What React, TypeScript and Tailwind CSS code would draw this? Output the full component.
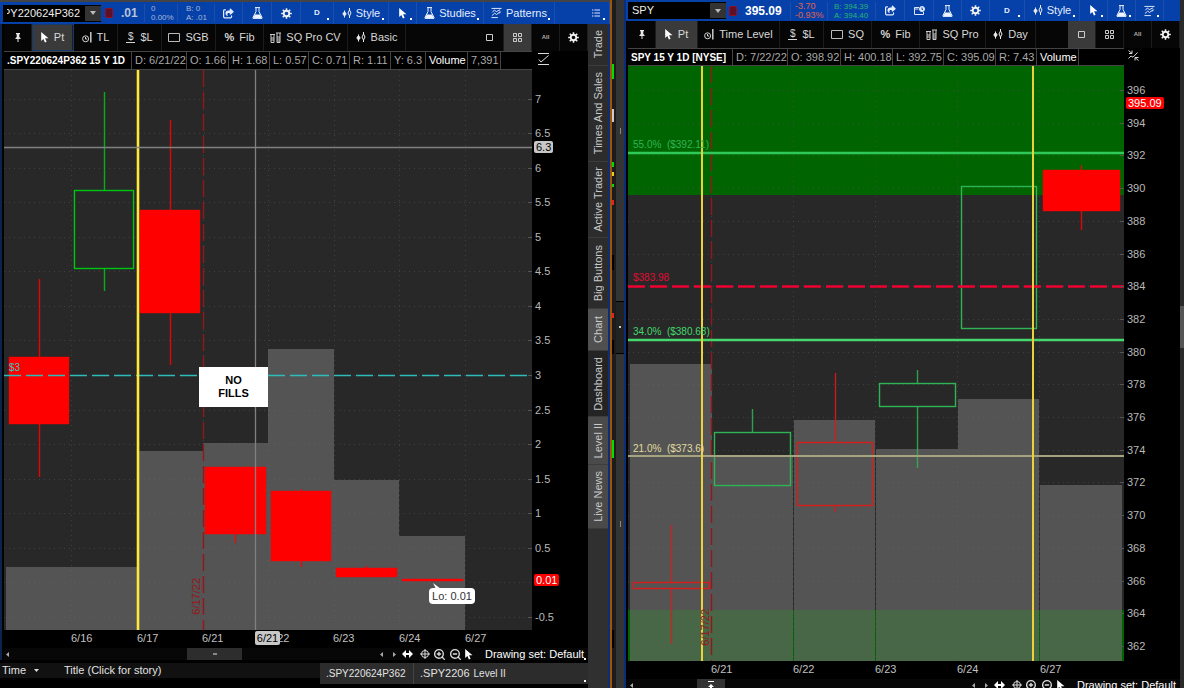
import React from "react";
import clsx from "clsx";
import { FaShareFromSquare } from "react-icons/fa6";
import { ZoomIn, ZoomOut } from "lucide-react";

type Candle = {
  x: number;
  w: number;
  top: number;
  bottom: number;
  high: number;
  low: number;
  color: string;
  hollow?: boolean;
};

type Volume = { x: number; w: number; top: number };
type Box = { x: number; y: number; w: number; h: number };
type Tick = { at: number; text: string };

/* ---------- icons ---------- */

const Pin = () => (
  <svg width="8" height="10" viewBox="0 0 8 10" fill="#e6e6e6">
    <path d="M2 0h4v1L5.3 1.5v2.4L6.6 5.2v.8H4.5V9h-1V6H1.4v-.8l1.3-1.3V1.5L2 1z" />
  </svg>
);

const Cursor = () => (
  <svg width="8" height="11" viewBox="0 0 9 13" fill="#fff">
    <path d="M0 0v10.5l2.6-2.3 1.8 4.2 2-.9-1.8-4.1H8.6z" />
  </svg>
);

const Gear = () => (
  <svg width="11" height="11" viewBox="0 0 12 12" fill="none" stroke="#f0f0f0">
    <circle cx="6" cy="6" r="3" strokeWidth="2" />
    <path d="M6 .2v2M6 9.8v2M.2 6h2M9.8 6h2M1.9 1.9l1.4 1.4M8.7 8.7l1.4 1.4M1.9 10.1l1.4-1.4M8.7 3.3l1.4-1.4" strokeWidth="1.7" />
  </svg>
);

const Flask = () => (
  <svg width="11" height="12" viewBox="0 0 11 12" fill="none" stroke="#eef3ff" strokeWidth="1">
    <path d="M3 .6h5M4 .6v4L1 10.4v1h9v-1L7 4.6v-4" />
    <path d="M3 7.6h5l1.8 3.4H1.2z" fill="#eef3ff" stroke="none" />
  </svg>
);

const Candles = () => (
  <svg width="10" height="11" viewBox="0 0 10 11" fill="none" stroke="#eee">
    <path d="M2.5 2.5v7M7.5 0v2M7.5 8v2" />
    <path d="M.8 6l1.7-2.5L4.2 6 2.5 8z" fill="#eee" />
    <path d="M6 5l1.5-3L9 5 7.5 8z" />
  </svg>
);

const Pattern = () => (
  <svg width="11" height="12" viewBox="0 0 12 12" fill="none" stroke="#eef3ff">
    <path d="M.5 1h11M1.5 5.2l2.2-2.5 2 1.8L10 2.5M.5 11h7M1 8.8l3-2.6 2 1.4 4-3M9 6.5l1.5-2" />
  </svg>
);

const ClockBar = () => (
  <svg width="10" height="11" viewBox="0 0 10 11" fill="none" stroke="#d5d5d5">
    <circle cx="3.6" cy="6.8" r="3" />
    <path d="M3.5 5v2h1.6" />
    <path d="M8.8 0v10.5" strokeWidth="1.4" />
  </svg>
);

const DollarLine = () => (
  <span className="flex w-[9px] flex-col items-center border-b border-[#d5d5d5] text-[10px] leading-[10px] text-[#d5d5d5]">$</span>
);

const Rect = () => (
  <svg width="12" height="9" viewBox="0 0 12 9" fill="none" stroke="#bbb">
    <path d="M.5.5h11v8H.5z" />
  </svg>
);

const Tubes = () => (
  <svg width="11" height="12" viewBox="0 0 11 12" fill="none" stroke="#ccc">
    <path d="M0 2.5h5M1 3v7.5h3V3M1 6h3M1 8h3M6 1h5M7 1v9.5h3V1M7 5h3M7 7h3M7 9h3" />
  </svg>
);

const Square = () => (
  <svg width="7" height="7" viewBox="0 0 7 7" fill="none" stroke="#ccc">
    <path d="M.5.5h6v6h-6z" />
  </svg>
);

const Grid = () => (
  <svg width="9" height="9" viewBox="0 0 9 9" fill="none" stroke="#ccc">
    <path d="M.5.5h3v3h-3zM5.5.5h3v3h-3zM.5 5.5h3v3h-3zM5.5 5.5h3v3h-3z" />
  </svg>
);

const ListIcon = () => (
  <svg width="8" height="8" viewBox="0 0 8 8" stroke="#dde8ff">
    <path d="M0 1h1.4M2.4 1H8M0 4h1.4M2.4 4H8M0 7h1.4M2.4 7H8" />
  </svg>
);

const DetachIcon = () => (
  <svg width="11" height="9" viewBox="0 0 11 9" fill="none" stroke="#dde8ff">
    <path d="M5 1.5H.5v7h9V6M.5 3h4" />
    <circle cx="8" cy="3" r="2.5" fill="#dde8ff" />
    <path d="M8 1.5v2h1" stroke="#0541a8" />
  </svg>
);

const Range = () => (
  <svg width="11" height="12" viewBox="0 0 11 12" fill="none" stroke="#ddd">
    <path d="M0 .5h11M0 11.5h11M.8 6.5L3 9l7.5-6.5" />
  </svg>
);

const PercentArrows = () => (
  <svg width="11" height="11" viewBox="0 0 11 11" fill="none" stroke="#ddd">
    <path d="M1 3.5h3V.5M.5.5L4 3.5" />
    <path d="M.5 8.5L3 6l2 1.2 4.5-4.7" />
    <path d="M7 10.5v-3h3.5M7 7.5l3.5 3" />
  </svg>
);

const WideArrow = () => (
  <svg width="11" height="8" viewBox="0 0 11 8" fill="#fff">
    <path d="M0 4l4-4v3h3V0l4 4-4 4V5H4v3z" />
  </svg>
);

const Crosshair = () => (
  <svg width="10" height="10" viewBox="0 0 10 10" fill="none" stroke="#ddd">
    <circle cx="5" cy="5" r="3.5" />
    <path d="M5 0v10M0 5h10" />
  </svg>
);

const LinkTag = () => <span className="h-2.5 w-2 shrink-0 rounded-[2px] border border-[#9a0c1c] bg-[#5e1026]" />;

/* ---------- header pieces ---------- */

function BlueCell({ width, children, menu, label }: { width: string; children: React.ReactNode; menu?: boolean; label: string }) {
  return (
    <button
      aria-label={label}
      className={clsx("relative flex h-full shrink-0 items-center justify-center gap-1 border-r border-[#1a4fae] text-[11px] text-[#e4ecff]", width)}
    >
      {children}
      {menu && <span className="absolute right-1 bottom-1 size-0.5 bg-white" />}
    </button>
  );
}

function Tool({ width, icon, text, active }: { width: string; icon: React.ReactNode; text?: string; active?: boolean }) {
  return (
    <button
      className={clsx(
        "flex h-full shrink-0 items-center justify-center gap-[5px] border-r border-[#1c1c1c] text-[11px] whitespace-nowrap text-[#d8d8d8]",
        width,
        active && "bg-[#3a3a3a]"
      )}
    >
      {icon}
      {text}
    </button>
  );
}

function SymbolBox({ value, clipped }: { value: string; clipped?: boolean }) {
  return (
    <div className="flex h-[17px] w-[98px] shrink-0 items-center bg-black px-1">
      <input
        aria-label="Symbol"
        defaultValue={value}
        className={clsx("min-w-0 flex-1 bg-transparent text-[11px] text-[#eee] outline-none", clipped && "-indent-1")}
      />
      <button aria-label="Symbol list" className="-mr-1 flex h-[15px] w-4 items-center justify-center bg-[#333]">
        <svg width="6" height="4" viewBox="0 0 6 4" fill="#bbb">
          <path d="M0 0h6L3 4z" />
        </svg>
      </button>
    </div>
  );
}

function Info({ width, children, bold }: { width: string; children: React.ReactNode; bold?: boolean }) {
  return (
    <span
      className={clsx(
        "flex h-full shrink-0 items-center border-r border-[#444] pl-[3px] text-[11px] whitespace-nowrap",
        bold ? "text-white" : "text-[#a9a9a9]",
        width
      )}
    >
      {children}
    </span>
  );
}

function DrawingTools() {
  return (
    <>
      <svg className="ml-auto" width="16" height="5" viewBox="0 0 16 5" fill="#aaa">
        <path d="M3 0v5L0 2.5zM13 0v5l3-2.5z" />
      </svg>
      <div className="ml-1.5 flex items-center gap-[3px] text-[#ddd]">
        <WideArrow />
        <span className="w-px" />
        <Crosshair />
        <ZoomIn size={13} strokeWidth={2.5} />
        <ZoomOut size={13} strokeWidth={2.5} />
        <Cursor />
      </div>
      <button className="relative ml-3 w-[103px] shrink-0 text-left text-[11px] leading-3 whitespace-nowrap text-white">
        Drawing set: Default
        <span className="absolute right-0.5 bottom-0 size-0.5 bg-white" />
      </button>
    </>
  );
}

/* ---------- chart ---------- */

function Plot({
  box,
  gridX,
  gridY,
  back,
  volumes,
  candles,
  children,
}: {
  box: Box;
  gridX: number[];
  gridY: number[];
  back?: React.ReactNode;
  volumes: Volume[];
  candles: Candle[];
  children: React.ReactNode;
}) {
  const bottom = box.y + box.h;
  return (
    <svg
      className="block h-full w-full bg-[#282828]"
      viewBox={`${box.x} ${box.y} ${box.w} ${box.h}`}
      preserveAspectRatio="none"
    >
      {back}
      {gridX.map((x) => (
        <path key={x} d={`M${x + 0.5} ${box.y}V${bottom}`} stroke="#4a4a4a" strokeOpacity=".7" strokeDasharray="1 4" />
      ))}
      {gridY.map((y) => (
        <path key={y} d={`M${box.x} ${Math.round(y) + 0.5}h${box.w}`} stroke="#4a4a4a" strokeOpacity=".7" strokeDasharray="1 4" />
      ))}
      {volumes.map((v) => (
        <rect key={v.x} x={v.x} y={v.top} width={v.w} height={bottom - v.top} fill="#696969" fillOpacity=".675" />
      ))}
      {candles.map((c) => {
        const mid = Math.floor(c.x + c.w / 2) + 0.5;
        return (
          <g key={c.x} stroke={c.color} strokeWidth="1.4">
            <path d={`M${mid} ${c.high}V${c.top}M${mid} ${c.bottom}V${c.low}`} strokeOpacity=".85" />
            <rect x={c.x + 0.5} y={c.top + 0.5} width={c.w - 1} height={c.bottom - c.top - 1} fill={c.hollow ? "none" : c.color} />
          </g>
        );
      })}
      {children}
    </svg>
  );
}

function YAxis({ box, ticks, children }: { box: Box; ticks: Tick[]; children?: React.ReactNode }) {
  return (
    <div className="relative w-14 shrink-0 bg-black text-[11px] leading-3 text-[#b9b9b9]">
      {ticks.map((t) => (
        <React.Fragment key={t.text}>
          <span className="absolute -left-1 h-px w-1 bg-[#555]" style={{ top: `${((t.at - box.y) / box.h) * 100}%` }} />
          <span className="absolute left-[3px] -translate-y-1/2" style={{ top: `${((t.at - box.y) / box.h) * 100}%` }}>
            {t.text}
          </span>
        </React.Fragment>
      ))}
      {children}
    </div>
  );
}

function XAxis({ box, ticks, children }: { box: Box; ticks: Tick[]; children?: React.ReactNode }) {
  return (
    <div className="mr-14 h-[18px] shrink-0">
      <div className="relative h-full text-[11px] leading-[17px] text-[#c0c0c0]">
        {ticks.map((t) => (
          <span key={t.text} className="absolute top-0" style={{ left: `${((t.at - box.x) / box.w) * 100}%` }}>
            {t.text}
          </span>
        ))}
        {children}
      </div>
    </div>
  );
}

function at(box: Box, x: number, y: number) {
  return { left: `${((x - box.x) / box.w) * 100}%`, top: `${((y - box.y) / box.h) * 100}%` };
}

/* ---------- option chart ---------- */

const OPT: Box = { x: 4, y: 70, w: 528, h: 560 };

const OPT_TICKS: Tick[] = [7, 6.5, 6, 5.5, 5, 4.5, 4, 3.5, 3, 2.5, 2, 1.5, 1, 0.5, -0.5].map((p) => ({
  at: 375 + (3 - p) * 69.1,
  text: String(p),
}));

const OPT_DATES: Tick[] = [
  { at: 71, text: "6/16" },
  { at: 137, text: "6/17" },
  { at: 202, text: "6/21" },
  { at: 268, text: "6/22" },
  { at: 333, text: "6/23" },
  { at: 399, text: "6/24" },
  { at: 465, text: "6/27" },
];

const OPT_VOLUMES: Volume[] = [
  { x: 6, w: 131, top: 567 },
  { x: 137, w: 66, top: 451 },
  { x: 203, w: 65, top: 443 },
  { x: 268, w: 66, top: 349 },
  { x: 334, w: 65, top: 480 },
  { x: 399, w: 66, top: 536 },
];

const OPT_CANDLES: Candle[] = [
  { x: 9, w: 60, top: 357, bottom: 424, high: 279, low: 477, color: "#f00" },
  { x: 74, w: 60, top: 190, bottom: 269, high: 92, low: 291, color: "#00c414", hollow: true },
  { x: 140, w: 60, top: 210, bottom: 313, high: 120, low: 365, color: "#f00" },
  { x: 205, w: 61, top: 467, bottom: 534, high: 467, low: 543, color: "#f00" },
  { x: 271, w: 60, top: 491, bottom: 561, high: 489, low: 567, color: "#f00" },
  { x: 336, w: 61, top: 568, bottom: 577, high: 566, low: 577, color: "#f00" },
  { x: 402, w: 61, top: 579, bottom: 581, high: 579, low: 581, color: "#f00" },
];

function OptionPanel() {
  return (
    <>
      <div className="flex h-[27px] shrink-0 bg-[#060606]">
        <Tool width="w-7" icon={<Pin />} />
        <div className="flex border border-[#173a6e]">
          <Tool width="w-10" icon={<Cursor />} text="Pt" active />
        </div>
        <Tool width="w-11" icon={<ClockBar />} text="TL" />
        <Tool width="w-11" icon={<DollarLine />} text="$L" />
        <Tool width="w-[54px]" icon={<Rect />} text="SGB" />
        <Tool width="w-12" icon={<b>%</b>} text="Fib" />
        <Tool width="w-[84px]" icon={<Tubes />} text="SQ Pro CV" />
        <Tool width="w-[58px]" icon={<Candles />} text="Basic" />
        <div className="flex-1" />
        <Tool width="w-7" icon={<Square />} />
        <Tool width="w-7" icon={<Grid />} active />
        <Tool width="w-7" icon={<b className="text-[6px] text-[#aaa]">All</b>} />
        <Tool width="w-7" icon={<Gear />} />
      </div>

      <div className="flex h-[19px] shrink-0">
        <div className="flex min-w-0 flex-1 border-y border-[#444]">
          <Info width="w-32" bold>
            <b className="text-[10px]">.SPY220624P362 15 Y 1D</b>
          </Info>
          <Info width="w-[55px]">D: 6/21/22</Info>
          <Info width="w-[42px]">O: 1.66</Info>
          <Info width="w-[41px]">H: 1.68</Info>
          <Info width="w-[39px]">L: 0.57</Info>
          <Info width="w-[41px]">C: 0.71</Info>
          <Info width="w-[41px]">R: 1.11</Info>
          <Info width="w-[35px]">Y: 6.3</Info>
          <Info width="w-[42px]" bold>
            Volume
          </Info>
          <Info width="w-[33px]">7,391</Info>
        </div>
        <div className="w-14 shrink-0 pt-0.5 pl-1.5">
          <Range />
        </div>
      </div>

      <div className="flex h-[560px] shrink-0">
        <div className="relative min-w-0 flex-1">
          <Plot
            box={OPT}
            gridX={[71, 137, 203, 268, 334, 399, 465]}
            gridY={[...OPT_TICKS.map((t) => t.at), 582]}
            volumes={OPT_VOLUMES}
            candles={OPT_CANDLES}
          >
            <path d="M203.5 70V630" stroke="#96171b" strokeWidth="1.4" strokeDasharray="17 5" />
            <path d="M4 375.5H532" stroke="#2cbcbc" strokeWidth="1.6" strokeDasharray="17 5" />
            <path d="M138 70V630" stroke="#ffe83c" strokeWidth="2.6" />
            <path d="M4 147.5H532M255.5 70V630" stroke="#808080" strokeWidth="1.3" />
          </Plot>
          <span className="absolute text-[10px] leading-3 text-[#35c3c3]" style={at(OPT, 9, 362)}>
            $3
          </span>
          <div
            className="absolute flex h-10 w-[69px] items-center justify-center bg-white text-center text-[11px] leading-[13px] font-bold text-black"
            style={at(OPT, 199, 367)}
          >
            NO
            <br />
            FILLS
          </div>
          <span className="absolute rotate-180 text-[11px] leading-3 text-[#96171b] [writing-mode:vertical-rl]" style={at(OPT, 190, 578)}>
            6/17/22
          </span>
          <div className="absolute" style={at(OPT, 429, 583)}>
            <svg className="ml-1 block" width="8" height="6" viewBox="0 0 8 6" fill="#fff">
              <path d="M0 0l3 6h5z" />
            </svg>
            <div className="-mt-px h-4 w-[46px] rounded bg-white text-center text-[11px] leading-4 whitespace-nowrap text-[#333]">Lo: 0.01</div>
          </div>
        </div>
        <YAxis box={OPT} ticks={OPT_TICKS}>
          <span className="absolute left-0.5 h-3 -translate-y-1/2 rounded-xs bg-[#c8c8c8] px-0.5 text-black" style={{ top: "13.8%" }}>
            6.3
          </span>
          <span className="absolute left-0.5 h-3 -translate-y-1/2 rounded-xs bg-[#f00] px-0.5 text-white" style={{ top: "91.1%" }}>
            0.01
          </span>
        </YAxis>
      </div>

      <XAxis box={OPT} ticks={OPT_DATES}>
        <span className="absolute top-px h-[14px] rounded-xs bg-[#c8c8c8] px-0.5 leading-[14px] text-black" style={{ left: "47.5%" }}>
          6/21
        </span>
      </XAxis>

      <div className="flex h-3 shrink-0 items-center bg-[#070707] pl-0.5">
        <svg width="3" height="5" viewBox="0 0 3 5" fill="#aaa">
          <path d="M3 0v5L0 2.5z" />
        </svg>
        <span className="ml-[178px] flex h-3 w-[55px] items-center justify-center bg-[#2d2d2d]">
          <span className="h-0.5 w-1 bg-[#888]" />
        </span>
        <DrawingTools />
      </div>
    </>
  );
}

const SIDE_TABS = [
  { name: "Trade", size: "h-[42px]", tone: "bg-[#2c2c2c]" },
  { name: "Times And Sales", size: "h-24", tone: "bg-[#2c2c2c]" },
  { name: "Active Trader", size: "h-[76px]", tone: "bg-[#2c2c2c]" },
  { name: "Big Buttons", size: "h-[71px]", tone: "bg-[#2c2c2c]" },
  { name: "Chart", size: "h-[42px]", tone: "bg-[#505050]" },
  { name: "Dashboard", size: "h-[66px]", tone: "bg-[#242424]" },
  { name: "Level II", size: "h-12", tone: "bg-[#4a4a4a]" },
  { name: "Live News", size: "h-16", tone: "bg-[#4a4a4a]" },
];

function LeftWindow() {
  return (
    <section className="flex min-w-0 flex-[610_1_0] flex-col border-t-2 border-[#444]">
      <div className="flex h-[22px] shrink-0 items-center bg-[#0541a8] pl-[3px]">
        <SymbolBox value="PY220624P362" clipped />
        <div className="flex w-[43px] shrink-0 items-center gap-2 pl-1">
          <LinkTag />
          <b className="text-[12px] text-[#b9c3d8]">.01</b>
        </div>
        <div className="w-[34px] shrink-0 border-x border-[#1a4fae] pl-1.5 text-[8px] leading-[9px] text-[#a8b6d6]">
          0<br />
          0.00%
        </div>
        <div className="w-[37px] shrink-0 border-r border-[#1a4fae] pl-2 text-[8px] leading-[9px] whitespace-nowrap text-[#a8b6d6]">
          B: 0<br />
          A: .01
        </div>
        <BlueCell label="Share" width="w-7">
          <FaShareFromSquare size={11} />
        </BlueCell>
        <BlueCell label="Lab" width="w-[29px]">
          <Flask />
        </BlueCell>
        <BlueCell label="Settings" width="w-[29px]">
          <Gear />
        </BlueCell>
        <BlueCell label="Aggregation" width="w-[33px]" menu>
          <b className="text-[8px]">D</b>
        </BlueCell>
        <BlueCell label="Style" width="w-[55px]" menu>
          <Candles />
          Style
        </BlueCell>
        <BlueCell label="Pointer" width="w-7" menu>
          <Cursor />
        </BlueCell>
        <BlueCell label="Studies" width="w-[67px]" menu>
          <Flask />
          Studies
        </BlueCell>
        <BlueCell label="Patterns" width="w-[71px]" menu>
          <Pattern />
          Patterns
        </BlueCell>
        <div className="flex-1" />
        <BlueCell label="Menu" width="w-7" menu>
          <ListIcon />
        </BlueCell>
      </div>

      <div className="flex min-h-0 flex-1">
        <div className="flex min-w-0 flex-1 flex-col">
          <div className="flex flex-col border-l-2 border-[#0a2450] pl-0.5">
            <OptionPanel />
          </div>
          <div className="mt-[3px] flex min-h-0 flex-1 text-[11px] text-[#e2e2e2]">
            <div className="flex h-[15px] w-80 shrink-0 items-center bg-[#111] pl-0.5 whitespace-nowrap">
              Time
              <svg className="mx-2" width="5" height="3" viewBox="0 0 5 3" fill="#ddd">
                <path d="M0 0h5L2.5 3z" />
              </svg>
              <span className="ml-[17px]">Title (Click for story)</span>
            </div>
            <div className="relative flex h-[21px] flex-1 items-center bg-[#2c2c2c] whitespace-nowrap">
              <button className="h-full w-[94px] border-r border-[#444] pl-1.5 text-left text-[10px]">.SPY220624P362</button>
              <button className="h-full pl-1.5 text-left">.SPY2206</button>
              <button className="h-full pl-1 text-left text-[10px]">Level II</button>
              <span className="absolute right-0.5 bottom-0.5 size-0.5 bg-white" />
            </div>
          </div>
        </div>

        <nav className="w-[22px] shrink-0 border-r-2 border-[#0a2f78] bg-[#303030]">
          {SIDE_TABS.map((tab) => (
            <button
              key={tab.name}
              className={clsx("flex w-full items-center justify-center border-b border-[#3c3c3c] text-[#c9c9c9]", tab.size, tab.tone)}
            >
              <span className="rotate-180 text-[11px] leading-3 whitespace-nowrap [writing-mode:vertical-rl]">{tab.name}</span>
            </button>
          ))}
        </nav>
      </div>
    </section>
  );
}

/* ---------- divider ---------- */

function Divider() {
  return (
    <div className="flex w-4 shrink-0">
      <div className="w-0.5 bg-[#a0540a]" />
      <svg className="w-1" viewBox="0 0 4 688" preserveAspectRatio="none" shapeRendering="crispEdges">
        <path d="M0 0h4v688H0z" fill="#1c1c1c" />
        <path d="M0 64h2v15H0zM0 162h2v5H0zM0 440h2v18H0zM0 184h2v3H0z" fill="#00e000" />
        <path d="M0 200h2v5H0zM0 313h2v5H0z" fill="#e82020" />
        <path d="M0 109h2v13H0z" fill="#ccc" />
        <path d="M0 172h2v4H0z" fill="#e8d020" />
        <path d="M0 255h2v15H0zM0 340h2v14H0zM0 630h2v18H0z" fill="#000" />
      </svg>
      <div className="flex w-2 flex-col items-center bg-[#343434] pt-32">
        <span className="h-1.5 w-px bg-[#888]" />
        <span className="mt-[167px] h-[53px] w-full border-y border-black bg-[#222] pt-6">
          <span className="mx-auto block size-0.5 bg-[#ccc]" />
        </span>
        <span className="mt-[167px] h-1.5 w-px bg-[#888]" />
      </div>
      <div className="w-0.5 bg-[#0a2f78]" />
    </div>
  );
}

/* ---------- stock chart ---------- */

const SPY: Box = { x: 628, y: 66, w: 496, h: 595 };

const SPY_TICKS: Tick[] = Array.from({ length: 18 }, (_, i) => ({
  at: 90 + i * 32.7,
  text: String(396 - i * 2),
}));

const SPY_DATES: Tick[] = [
  { at: 711, text: "6/21" },
  { at: 793, text: "6/22" },
  { at: 875, text: "6/23" },
  { at: 957, text: "6/24" },
  { at: 1040, text: "6/27" },
];

const SPY_VOLUMES: Volume[] = [
  { x: 630, w: 82, top: 364 },
  { x: 712, w: 81, top: 456 },
  { x: 794, w: 81, top: 420 },
  { x: 876, w: 82, top: 449 },
  { x: 958, w: 81, top: 399 },
  { x: 1040, w: 82, top: 485 },
];

const SPY_CANDLES: Candle[] = [
  { x: 633, w: 77, top: 582, bottom: 589, high: 525, low: 644, color: "#d91c1c", hollow: true },
  { x: 714, w: 77, top: 432, bottom: 486, high: 409, low: 486, color: "#2fb455", hollow: true },
  { x: 797, w: 76, top: 442, bottom: 506, high: 373, low: 512, color: "#d91c1c", hollow: true },
  { x: 879, w: 77, top: 383, bottom: 407, high: 370, low: 468, color: "#2fb455", hollow: true },
  { x: 961, w: 76, top: 186, bottom: 329, high: 186, low: 329, color: "#2fb455", hollow: true },
  { x: 1043, w: 77, top: 170, bottom: 211, high: 165, low: 230, color: "#f00" },
];

const LEVELS = [
  { y: 139, text: "55.0%  ($392.11)", tone: "text-[#2fb455]" },
  { y: 272, text: "$383.98", tone: "text-[#e00b33]" },
  { y: 326, text: "34.0%  ($380.68)", tone: "text-[#44d86c]" },
  { y: 443, text: "21.0%  ($373.6)", tone: "text-[#e0dca0]" },
];

function RightWindow() {
  return (
    <section className="flex min-w-0 flex-[554_1_0] flex-col overflow-hidden">
      <div className="flex h-[21px] shrink-0 items-center overflow-hidden bg-[#0541a8] pl-0.5">
        <SymbolBox value="SPY" />
        <div className="flex w-16 shrink-0 items-center gap-2 pl-[3px]">
          <LinkTag />
          <b className="text-[12px] text-white">395.09</b>
        </div>
        <div className="w-[38px] shrink-0 border-x border-[#1a4fae] pl-1 text-[9px] leading-[9px] text-[#e2604a]">
          -3.70
          <br />
          -0.93%
        </div>
        <div className="w-12 shrink-0 border-r border-[#1a4fae] pl-1.5 text-[8px] leading-[9px] whitespace-nowrap text-[#27b574]">
          B: 394.39
          <br />
          A: 394.40
        </div>
        <BlueCell label="Share" width="w-[29px]">
          <FaShareFromSquare size={11} />
        </BlueCell>
        <BlueCell label="Detach" width="w-[29px]">
          <DetachIcon />
        </BlueCell>
        <BlueCell label="Lab" width="w-7">
          <Flask />
        </BlueCell>
        <BlueCell label="Settings" width="w-7">
          <Gear />
        </BlueCell>
        <BlueCell label="Aggregation" width="w-[35px]" menu>
          <b className="text-[8px]">D</b>
        </BlueCell>
        <BlueCell label="Style" width="w-[55px]" menu>
          <Candles />
          Style
        </BlueCell>
        <BlueCell label="Pointer" width="w-7" menu>
          <Cursor />
        </BlueCell>
        <BlueCell label="Studies" width="w-7" menu>
          <Flask />
        </BlueCell>
        <BlueCell label="Patterns" width="w-7" menu>
          <Pattern />
        </BlueCell>
      </div>

      <div className="flex h-[27px] shrink-0 bg-[#060606] pl-0.5">
        <Tool width="w-7" icon={<Pin />} />
        <Tool width="w-[42px]" icon={<Cursor />} text="Pt" active />
        <Tool width="w-[82px]" icon={<ClockBar />} text="Time Level" />
        <Tool width="w-11" icon={<DollarLine />} text="$L" />
        <Tool width="w-12" icon={<Rect />} text="SQ" />
        <Tool width="w-12" icon={<b>%</b>} text="Fib" />
        <Tool width="w-[66px]" icon={<Tubes />} text="SQ Pro" />
        <Tool width="w-[50px]" icon={<Candles />} text="Day" />
        <div className="flex-1" />
        <Tool width="w-7" icon={<Square />} active />
        <Tool width="w-7" icon={<Grid />} />
        <Tool width="w-7" icon={<b className="text-[6px] text-[#aaa]">All</b>} />
        <Tool width="w-7" icon={<Gear />} />
      </div>

      <div className="flex h-[18px] shrink-0 pl-0.5">
        <div className="flex min-w-0 flex-1 border-y border-[#444]">
          <Info width="w-[105px]" bold>
            <b className="text-[10px]">SPY 15 Y 1D [NYSE]</b>
          </Info>
          <Info width="w-[55px]">D: 7/22/22</Info>
          <Info width="w-[53px]">O: 398.92</Info>
          <Info width="w-[52px]">H: 400.18</Info>
          <Info width="w-[51px]">L: 392.75</Info>
          <Info width="w-[52px]">C: 395.09</Info>
          <Info width="w-[41px]">R: 7.43</Info>
          <Info width="w-[42px]" bold>
            Volume
          </Info>
        </div>
        <div className="w-14 shrink-0 pt-0.5 pl-1">
          <PercentArrows />
        </div>
      </div>

      <div className="flex h-[595px] shrink-0 pl-0.5">
        <div className="relative min-w-0 flex-1">
          <Plot
            box={SPY}
            gridX={[711, 793, 875, 957, 1039]}
            gridY={SPY_TICKS.map((t) => t.at)}
            back={<path d="M628 66h496v129H628zM628 610h496v51H628z" fill="#006400" />}
            volumes={SPY_VOLUMES}
            candles={SPY_CANDLES}
          >
            <path d="M711.5 66V661" stroke="#96171b" strokeWidth="1.4" strokeDasharray="17 5" />
            <path d="M628 153H1124" stroke="#2fc95a" strokeWidth="2.4" />
            <path d="M628 286.5H1124" stroke="#f00030" strokeWidth="2.4" strokeDasharray="17 5" />
            <path d="M628 340H1124" stroke="#44d86c" strokeWidth="2.4" />
            <path d="M628 456H1124" stroke="#a5a27e" strokeWidth="2" />
            <path d="M702 66V661M1033 66V661" stroke="#ecd03c" strokeWidth="2" />
          </Plot>
          {LEVELS.map((l) => (
            <span key={l.text} className={clsx("absolute text-[10px] leading-3 whitespace-pre", l.tone)} style={at(SPY, 633, l.y)}>
              {l.text}
            </span>
          ))}
          <span className="absolute rotate-180 text-[11px] leading-3 text-[#96171b] [writing-mode:vertical-rl]" style={at(SPY, 699, 609)}>
            6/17/22
          </span>
        </div>
        <YAxis box={SPY} ticks={SPY_TICKS}>
          <span className="absolute left-0.5 h-3 -translate-y-1/2 rounded-xs bg-[#f00] px-0.5 text-white" style={{ top: "6.3%" }}>
            395.09
          </span>
        </YAxis>
      </div>

      <div className="pl-0.5">
        <XAxis box={SPY} ticks={SPY_DATES} />
      </div>

      <div className="flex h-3 shrink-0 items-center bg-[#070707] pl-1">
        <svg width="3" height="5" viewBox="0 0 3 5" fill="#aaa">
          <path d="M3 0v5L0 2.5z" />
        </svg>
        <span className="ml-16 flex h-3 w-7 items-center justify-center bg-[#333]">
          <svg width="6" height="8" viewBox="0 0 6 8" fill="#fff">
            <path d="M0 0h6v1H0zM3 3l3 3H4v2H2V6H0z" />
          </svg>
        </span>
        <DrawingTools />
      </div>
    </section>
  );
}

export default function App() {
  return (
    <main className="flex h-screen w-full overflow-hidden bg-black font-['Liberation_Sans',Arial,sans-serif]">
      <LeftWindow />
      <Divider />
      <RightWindow />
      <div className="w-1 shrink-0 bg-[#2a2a2a] pt-[306px]">
        <div className="h-[42px] bg-[#555]" />
      </div>
    </main>
  );
}
